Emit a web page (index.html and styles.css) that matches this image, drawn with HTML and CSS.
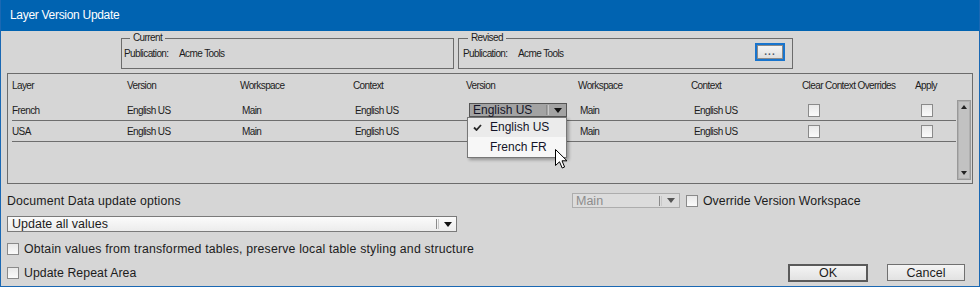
FILE: index.html
```html
<!DOCTYPE html>
<html lang="en">
<head>
  <meta charset="UTF-8">
  <title>Layer Version Update</title>
  <link rel="stylesheet" href="styles.css">
</head>
<body>
  <div class="dialog">
    <div class="titlebar">Layer Version Update</div>

    <div class="groups">
      <fieldset class="group group-current">
        <legend>Current</legend>
        <div class="pub">
          <span class="pub-label">Publication:</span>
          <span>Acme Tools</span>
        </div>
      </fieldset>
      <fieldset class="group group-revised">
        <legend>Revised</legend>
        <div class="pub">
          <span class="pub-label">Publication:</span>
          <span class="pub-name">Acme Tools</span>
          <button class="browse"><span class="dots">...</span></button>
        </div>
      </fieldset>
    </div>

    <div class="layers">
      <div class="grid layers-head">
        <span>Layer</span>
        <span>Version</span>
        <span>Workspace</span>
        <span>Context</span>
        <span>Version</span>
        <span>Workspace</span>
        <span>Context</span>
        <span>Clear Context Overrides</span>
        <span>Apply</span>
      </div>
      <div class="layers-body">
        <div class="rows">
          <div class="grid row">
            <span>French</span>
            <span>English US</span>
            <span class="indent">Main</span>
            <span class="indent">English US</span>
            <span>
              <span class="version-select">
                <span class="version-value">English US</span>
                <span class="select-sep"></span>
                <span class="select-arrow"></span>
                <div class="menu">
                  <div class="menu-item">
                    <svg class="tick" width="9" height="7" viewBox="0 0 9 7"><path d="M1 3.5 L3.5 6 L8 1" fill="none" stroke="#2a2a2a" stroke-width="1.8"/></svg>
                    English US
                  </div>
                  <div class="menu-item menu-item-hover">French FR</div>
                  <svg class="cursor" width="13" height="20" viewBox="0 0 13 20"><path d="M0.5 0.5 L0.5 16.5 L4.5 12.8 L7.2 19 L9.6 18 L7 11.8 L12 11.8 Z" fill="#fff" stroke="#000" stroke-width="1"/></svg>
                </div>
              </span>
            </span>
            <span class="indent">Main</span>
            <span class="indent-3">English US</span>
            <span><span class="check check-cell"></span></span>
            <span><span class="check check-cell"></span></span>
          </div>
          <div class="grid row">
            <span>USA</span>
            <span>English US</span>
            <span class="indent">Main</span>
            <span class="indent">English US</span>
            <span></span>
            <span class="indent">Main</span>
            <span class="indent-3">English US</span>
            <span><span class="check check-cell"></span></span>
            <span><span class="check check-cell"></span></span>
          </div>
        </div>
        <div class="scrollbar">
          <span class="scroll-up"></span>
          <span class="scroll-down"></span>
        </div>
      </div>
    </div>

    <div class="options-row">
      <span class="options-label">Document Data update options</span>
      <span class="select select-disabled">
        <span class="select-text">Main</span>
        <span class="select-sep"></span>
        <span class="select-arrow"></span>
      </span>
      <span class="check"></span>
      <span class="check-label">Override Version Workspace</span>
    </div>

    <div class="select select-wide">
      <span class="select-text">Update all values</span>
      <span class="select-sep"></span>
      <span class="select-arrow"></span>
    </div>

    <div class="check-row">
      <span class="check"></span>
      <span class="check-label">Obtain values from transformed tables, preserve local table styling and structure</span>
    </div>

    <div class="footer">
      <div class="check-row-inline">
        <span class="check"></span>
        <span class="check-label">Update Repeat Area</span>
      </div>
      <div class="buttons">
        <button class="btn btn-default">OK</button>
        <button class="btn">Cancel</button>
      </div>
    </div>
  </div>
</body>
</html>
```

FILE: styles.css
```css
body {
  margin: 0;
  padding: 0;
  font-family: "Liberation Sans", Arial, sans-serif;
  color: #1c1c1c;
}

.dialog {
  width: 980px;
  height: 287px;
  box-sizing: border-box;
  border: 1px solid #1a68b3;
  border-top: none;
  background-color: #d6d6d6;
  overflow: hidden;
}

.titlebar {
  height: 31px;
  line-height: 31px;
  margin: 0 -1px;
  padding-left: 10px;
  background-color: #0063b1;
  color: #fff;
  font-size: 12px;
  letter-spacing: -0.3px;
}

/* Current / Revised boxes */
.groups {
  display: flex;
  gap: 4px;
  margin: 1px 0 0 120px;
}

.group {
  margin: 0;
  padding: 0 2px 8px;
  border: 1px solid #6c6c6c;
  min-width: 0;
  font-size: 10px;
  letter-spacing: -0.6px;
}

.group-current {
  width: 327px;
}

.group-revised {
  width: 322px;
  padding-left: 4px;
  padding-right: 7px;
}

.group legend {
  margin-left: 6px;
  padding: 0 3px;
  line-height: 12px;
}

.group-revised legend {
  margin-left: 5px;
}

.pub {
  display: flex;
  align-items: center;
  height: 12px;
  margin-top: 4px;
  line-height: 12px;
}

.pub-label {
  width: 55px;
}

.pub-name {
  flex: 1;
}

.browse {
  box-sizing: border-box;
  display: flex;
  justify-content: center;
  align-items: flex-end;
  width: 30px;
  height: 18px;
  margin-bottom: 4px;
  padding: 0 0 3px;
  border: 2px solid #1874cd;
  box-shadow: inset 0 0 0 1px #8a8a8a;
  background: linear-gradient(#f6f6f6, #dcdcdc);
}

.dots {
  font-family: "Liberation Sans", Arial, sans-serif;
  font-size: 10px;
  font-weight: bold;
  line-height: 8px;
  letter-spacing: 1px;
  color: #4f5a6a;
}

/* layer table */
.layers {
  box-sizing: border-box;
  height: 111px;
  margin: 4px 6px 0;
  padding: 6px 1px 0 4px;
  border: 1px solid #6c6c6c;
  font-size: 10px;
  letter-spacing: -0.6px;
}

.grid {
  display: grid;
  grid-template-columns: 115px 113px 113px 113px 112px 113px 111px 113px 1fr;
  align-items: center;
}

.layers-head {
  line-height: 12px;
}

.layers-body {
  display: flex;
  margin-top: 8px;
}

.rows {
  flex: 1;
}

.row {
  height: 20px;
  border-bottom: 1px solid #6e6e6e;
}

.indent {
  padding-left: 2px;
}

.indent-3 {
  padding-left: 3px;
}

.version-select {
  position: relative;
  box-sizing: border-box;
  display: flex;
  align-items: center;
  width: 98px;
  height: 14px;
  margin-left: 3px;
  border: 1px solid #555;
  background-color: #a3a3a3;
  font-size: 12px;
  letter-spacing: 0;
  color: #141428;
}

.version-value {
  flex: 1;
  padding-left: 3px;
}

.select-sep {
  width: 1px;
  height: 10px;
  margin-right: 5px;
  border-left: 1px solid #8a8a8a;
  border-right: 1px solid #c8c8c8;
}

.select-arrow {
  width: 0;
  height: 0;
  margin-right: 4px;
  border-left: 4px solid transparent;
  border-right: 4px solid transparent;
  border-top: 5px solid #111;
}

.menu {
  position: absolute;
  top: 13px;
  left: -3px;
  width: 100px;
  box-sizing: border-box;
  border: 1px solid #777;
  background-color: #ebebeb;
  box-shadow: 2px 2px 3px rgba(0, 0, 0, 0.3);
  z-index: 2;
}

.menu-item {
  position: relative;
  height: 19px;
  line-height: 19px;
  padding-left: 22px;
}

.menu-item-hover {
  background-color: #f7f7f7;
  height: 20px;
  line-height: 20px;
}

.tick {
  position: absolute;
  left: 5px;
  top: 6px;
}

.cursor {
  position: absolute;
  left: 87px;
  top: 31px;
}

.check {
  display: inline-block;
  box-sizing: border-box;
  width: 12px;
  height: 12px;
  border: 1px solid #8a8a8a;
  background: linear-gradient(#e9e9e9, #fbfbfb);
  flex-shrink: 0;
}

.check-cell {
  display: block;
  height: 13px;
  margin-left: 6px;
}

.scrollbar {
  position: relative;
  box-sizing: border-box;
  width: 14px;
  height: 80px;
  margin-left: 1px;
  border: 1px solid #999;
  background-color: #c2c2c2;
  box-shadow: inset 1px 1px 0 #b0b0b0, inset -1px -1px 0 #b0b0b0;
}

.scroll-up,
.scroll-down {
  position: absolute;
  left: 3px;
  width: 0;
  height: 0;
  border-left: 3px solid transparent;
  border-right: 3px solid transparent;
}

.scroll-up {
  top: 4px;
  border-bottom: 4px solid #222;
}

.scroll-down {
  bottom: 4px;
  border-top: 4px solid #222;
}

/* bottom options */
.options-row {
  display: flex;
  align-items: center;
  height: 17px;
  margin: 8px 0 0 6px;
  font-size: 12.3px;
  letter-spacing: 0.15px;
}

.options-label {
  width: 565px;
}

.select {
  box-sizing: border-box;
  display: flex;
  align-items: center;
  border: 1px solid #7a7a7a;
  background: linear-gradient(#fbfbfb, #ececec);
  font-size: 12.5px;
  letter-spacing: 0;
}

.select-text {
  flex: 1;
  padding-left: 3px;
}

.select-disabled {
  width: 108px;
  height: 15px;
  border-color: #adadad;
  background: #dcdcdc;
  color: #8c8c8c;
}

.select-disabled .select-arrow {
  border-top-color: #555;
}

.select-disabled + .check {
  margin-left: 6px;
}

.check-label {
  margin-left: 5px;
  font-size: 12.3px;
  letter-spacing: 0.18px;
}

.options-row .check-label {
  letter-spacing: 0.05px;
}

.select-wide {
  width: 450px;
  height: 16px;
  margin: 7px 0 0 6px;
  font-size: 12.5px;
}

.select-wide .select-text {
  padding-left: 4px;
}

.check-row,
.check-row-inline {
  display: flex;
  align-items: center;
}

.check-row {
  height: 16px;
  margin: 9px 0 0 6px;
}

.check-row-inline .check-label {
  letter-spacing: 0.05px;
}

.footer {
  display: flex;
  justify-content: space-between;
  align-items: center;
  height: 18px;
  margin: 7px 14px 0 6px;
}

.buttons {
  display: flex;
  gap: 19px;
}

.btn {
  box-sizing: border-box;
  width: 78px;
  height: 17px;
  padding: 0;
  border: 1px solid #707070;
  background: linear-gradient(#f4f4f4, #e2e2e2);
  font-family: "Liberation Sans", Arial, sans-serif;
  font-size: 12.5px;
  color: #1c1c1c;
  line-height: 14px;
}

.btn-default {
  width: 80px;
  height: 18px;
  border: 2px solid #5a5a5a;
}
```
